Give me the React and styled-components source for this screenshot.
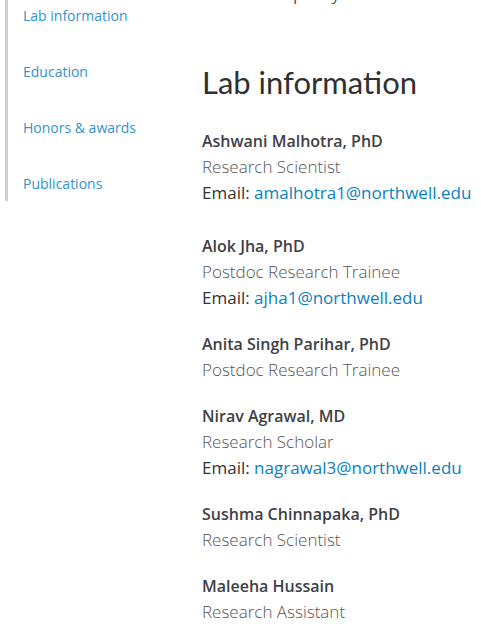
import React from 'react';
import styled, { createGlobalStyle } from 'styled-components';

const GlobalStyle = createGlobalStyle`
  html, body {
    margin: 0;
    padding: 0;
    background: #fff;
    overflow: hidden;
  }
  body {
    font-family: 'Open Sans', 'Noto Sans', sans-serif;
    color: #333;
  }
`;

const Page = styled.div`
  display: flex;
  align-items: flex-start;
`;

const Sidebar = styled.nav`
  flex: 0 0 auto;
  width: 179px;
  margin-left: 5px;
  border-left: 3px solid #cfcfcf;
  padding: 6px 0 7px 15px;
  display: flex;
  flex-direction: column;
  gap: 36px;
`;

const NavLink = styled.a`
  font-size: 14px;
  line-height: 20px;
  color: #3493cb;
  text-decoration: none;
`;

const Main = styled.main`
  flex: 1;
  padding-right: 8px;
`;

const Intro = styled.p`
  margin: -19px 0 0;
  font-size: 17px;
  line-height: 26px;
  color: #555;
`;

const Heading = styled.h2`
  margin: 55px 0 26px;
  font-family: Lato, 'Open Sans', sans-serif;
  font-size: 31px;
  line-height: 40px;
  font-weight: 400;
  color: #2f3033;
`;

const Person = styled.div`
  margin-bottom: ${(p) => p.gap}px;
  font-size: 17px;
  line-height: 26px;
`;

const Name = styled.div`
  font-size: 16px;
  font-weight: 600;
  color: #404145;
`;

const Role = styled.div`
  font-weight: 300;
  color: #555;
`;

const EmailLine = styled.div`
  color: #333;
`;

const Mail = styled.a`
  color: #0a7fc0;
  text-decoration: none;
`;

const nav = ['Lab information', 'Education', 'Honors & awards', 'Publications'];

const people = [
  { name: 'Ashwani Malhotra, PhD', role: 'Research Scientist', email: 'amalhotra1@northwell.edu', gap: 27 },
  { name: 'Alok Jha, PhD', role: 'Postdoc Research Trainee', email: 'ajha1@northwell.edu', gap: 20 },
  { name: 'Anita Singh Parihar, PhD', role: 'Postdoc Research Trainee', gap: 20 },
  { name: 'Nirav Agrawal, MD', role: 'Research Scholar', email: 'nagrawal3@northwell.edu', gap: 20 },
  { name: 'Sushma Chinnapaka, PhD', role: 'Research Scientist', gap: 20 },
  { name: 'Maleeha Hussain', role: 'Research Assistant', gap: 20 },
];

export default function App() {
  return (
    <>
      <GlobalStyle />
      <Page>
        <Sidebar>
          {nav.map((item) => (
            <NavLink key={item} href="#">
              {item}
            </NavLink>
          ))}
        </Sidebar>
        <Main>
          <Intro>research capacity.</Intro>
          <Heading>Lab information</Heading>
          {people.map((p) => (
            <Person key={p.name} gap={p.gap}>
              <Name>{p.name}</Name>
              <Role>{p.role}</Role>
              {p.email && (
                <EmailLine>
                  Email: <Mail href={`mailto:${p.email}`}>{p.email}</Mail>
                </EmailLine>
              )}
            </Person>
          ))}
        </Main>
      </Page>
    </>
  );
}
